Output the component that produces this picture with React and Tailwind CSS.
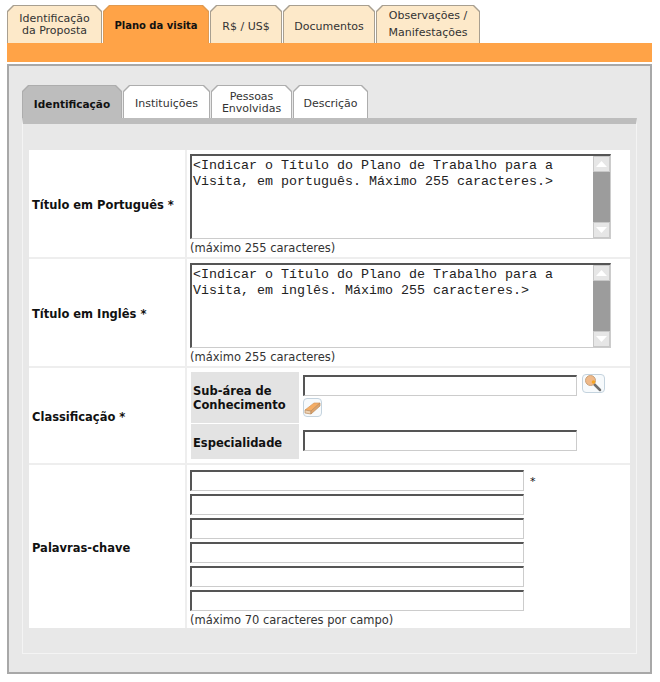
const verdana = "font-['DejaVu_Sans',Verdana,sans-serif]";
const chamfer = "[clip-path:polygon(6px_0,calc(100%-6px)_0,100%_6px,100%_100%,0_100%,0_6px)]";

const topTabs = [
  { label: <>Identificação<br />da Proposta</>, w: "w-[95px]", text: "leading-[12px] pt-[1px] text-[11px]" },
  { label: "Plano da visita", w: "w-[106px]", active: true, text: "leading-[12px] pt-[3px] text-[10px]" },
  { label: "R$ / US$", w: "w-[72px]", text: "leading-[12px] pt-[4px] text-[11px]" },
  { label: "Documentos", w: "w-[92px]", text: "leading-[12px] pt-[4px] text-[11px]" },
  { label: <>Observações /<br />Manifestações</>, w: "w-[104px]", text: "leading-[17px] pb-[1px] text-[11px]" },
];

const subTabs = [
  { label: "Identificação", w: "w-[100px]", active: true, text: "pt-[3px] text-[10.5px]" },
  { label: "Instituições", w: "w-[87px]", text: "pt-[3px] text-[11px]" },
  { label: <>Pessoas<br />Envolvidas</>, w: "w-[81px]", text: "pt-[2px] text-[11px]" },
  { label: "Descrição", w: "w-[75px]", text: "pt-[3px] text-[11px]" },
];

function TopTab({ tab }) {
  return (
    <div className={`${tab.w} h-[38px] ${chamfer} pt-[1px] px-[1px] ${tab.active ? "bg-[#e09a50]" : "bg-[#a89f90]"}`}>
      <div
        className={`h-full flex items-center justify-center text-center ${chamfer} ${tab.text} ${
          tab.active ? "bg-[#ffa347] font-bold text-[#111]" : "bg-[#fde9c9] text-[#333]"
        }`}
      >
        <span>{tab.label}</span>
      </div>
    </div>
  );
}

function SubTab({ tab }) {
  return (
    <div className={`${tab.w} h-[33px] ${chamfer} pt-[1px] px-[1px] bg-[#adadad]`}>
      <div
        className={`h-full flex items-center justify-center text-center leading-[12px] ${chamfer} ${tab.text} ${
          tab.active ? "bg-[#bdbdbd] font-bold text-[#111]" : "bg-white text-[#333]"
        }`}
      >
        <span>{tab.label}</span>
      </div>
    </div>
  );
}

function TextInput({ w }) {
  return <div className={`${w} h-[21px] shrink-0 bg-white border-t-2 border-l-2 border-r border-b border-t-[#555] border-l-[#555] border-r-[#ccc] border-b-[#ccc]`} />;
}

function ScrollArrow({ up }) {
  return (
    <div className="w-[17px] h-[16px] bg-[#e6e6e6] border border-[#c8c8c8] flex items-center justify-center">
      <svg width="11" height="6" viewBox="0 0 11 6">
        <path d={up ? "M5.5 0 L11 6 L0 6 Z" : "M0 0 L11 0 L5.5 6 Z"} fill="#fff" />
      </svg>
    </div>
  );
}

function FakeTextarea({ value }) {
  return (
    <div className="flex w-[421px] h-[85px] border-t-2 border-l-2 border-r border-b border-t-[#555] border-l-[#555] border-r-[#ccc] border-b-[#ccc] bg-white">
      <textarea
        readOnly
        defaultValue={value}
        className="flex-1 h-full resize-none overflow-hidden pl-[1px] pt-[2px] text-[13.33px] leading-[16px] text-[#222] font-['Liberation_Mono',monospace] outline-none"
      />
      <div className="w-[17px] h-full bg-[#9c9c9c] flex flex-col justify-between">
        <ScrollArrow up />
        <ScrollArrow />
      </div>
    </div>
  );
}

function Row({ label, h, children }) {
  return (
    <div className={`flex gap-[2px] ${h}`}>
      <div className="w-[156px] shrink-0 bg-white flex items-center pl-[3px] pt-[5px] font-bold text-[11.5px] text-[#111]">{label}</div>
      <div className="flex-1 bg-white">{children}</div>
    </div>
  );
}

function TextareaCell({ value }) {
  return (
    <div className="pl-[3px] pt-[4px]">
      <FakeTextarea value={value} />
      <div className="text-[11.5px] leading-[13px] mt-[3px] text-[#333]">(máximo 255 caracteres)</div>
    </div>
  );
}

function IconButton({ w, children }) {
  return (
    <div className={`${w} h-[19px] shrink-0 bg-[#f7fafc] border border-[#c4d3de] rounded-[4px] flex items-center justify-center`}>
      {children}
    </div>
  );
}

function Magnifier() {
  return (
    <svg width="19" height="17" viewBox="0 0 19 17">
      <path d="M9 8 L16 15" stroke="#6f6f6f" strokeWidth="2.5" strokeLinecap="round" />
      <circle cx="6.5" cy="5.5" r="5" fill="#efb989" stroke="#c9a27c" strokeWidth="1" />
      <circle cx="9.5" cy="7" r="1.8" fill="#f5a623" />
    </svg>
  );
}

function Eraser() {
  return (
    <svg width="17" height="14" viewBox="0 0 17 14">
      <path d="M1 9 L10 2 L16 2 L7 10 Z" fill="#f6ad64" stroke="#d4995f" strokeWidth="0.7" />
      <path d="M1 9 L7 10 L7 13 L1 12 Z" fill="#eed3b5" stroke="#b9895c" strokeWidth="0.7" />
      <path d="M7 10 L16 2 L16 5 L7 13 Z" fill="#dfa56c" stroke="#b9895c" strokeWidth="0.7" />
    </svg>
  );
}

export default function App() {
  return (
    <div className={`w-[660px] h-[682px] bg-white pt-[5px] pl-[7px] ${verdana}`}>
      {/* abas principais */}
      <div className="flex items-end gap-[1px]">
        {topTabs.map((tab, i) => (
          <TopTab key={i} tab={tab} />
        ))}
      </div>
      <div className="w-[645px] h-[19px] bg-[#ffa347]" />

      <div className="w-[645px] h-[610px] mt-[2px] bg-[#e8e8e8] border-2 border-[#a8a8a8] pl-[13px] pt-[19px]">
        {/* abas internas */}
        <div className="flex items-end gap-[1px]">
          {subTabs.map((tab, i) => (
            <SubTab key={i} tab={tab} />
          ))}
        </div>

        <div className="w-[615px] h-[536px] border-t-[6px] border-t-[#bdbdbd] border-x border-b border-x-[#f4f4f4] border-b-[#f4f4f4] pl-[6px] pt-[26px]">
          <div className="w-[601px] bg-[#eeeeee] flex flex-col gap-[2px]">
            <Row label="Título em Português *" h="h-[107px]">
              <TextareaCell value="<Indicar o Título do Plano de Trabalho para a Visita, em português. Máximo 255 caracteres.>" />
            </Row>
            <Row label="Título em Inglês *" h="h-[107px]">
              <TextareaCell value="<Indicar o Título do Plano de Trabalho para a Visita, em inglês. Máximo 255 caracteres.>" />
            </Row>
            <Row label="Classificação *" h="h-[95px]">
              <div className="pl-[4px] pt-[4px] flex flex-col gap-[1px]">
                <div className="flex h-[51px]">
                  <div className="w-[108px] bg-[#e3e3e3] flex items-center pl-[2px] font-bold text-[11.5px] leading-[14px] text-[#111]">
                    <span>Sub-área de<br />Conhecimento</span>
                  </div>
                  <div className="pl-[4px] pt-[3px]">
                    <div className="flex gap-[5px]">
                      <TextInput w="w-[274px]" />
                      <div className="-mt-[1px]">
                        <IconButton w="w-[23px]"><Magnifier /></IconButton>
                      </div>
                    </div>
                    <div className="mt-[2px]">
                      <IconButton w="w-[19px]"><Eraser /></IconButton>
                    </div>
                  </div>
                </div>
                <div className="flex h-[35px]">
                  <div className="w-[108px] bg-[#e3e3e3] flex items-center pl-[2px] pt-[5px] font-bold text-[11.5px] text-[#111]">Especialidade</div>
                  <div className="pl-[4px] pt-[6px]">
                    <TextInput w="w-[274px]" />
                  </div>
                </div>
              </div>
            </Row>
            <Row label="Palavras-chave" h="h-[163px]">
              <div className="pl-[3px] pt-[5px] flex flex-col gap-[3px]">
                <div className="flex h-[21px]">
                  <TextInput w="w-[334px]" />
                  <span className="ml-[6px] text-[11px] leading-[24px] text-[#111]">*</span>
                </div>
                <TextInput w="w-[334px]" />
                <TextInput w="w-[334px]" />
                <TextInput w="w-[334px]" />
                <TextInput w="w-[334px]" />
                <TextInput w="w-[334px]" />
                <div className="text-[11.5px] leading-[13px] text-[#333]">(máximo 70 caracteres por campo)</div>
              </div>
            </Row>
          </div>
        </div>
      </div>
    </div>
  );
}
